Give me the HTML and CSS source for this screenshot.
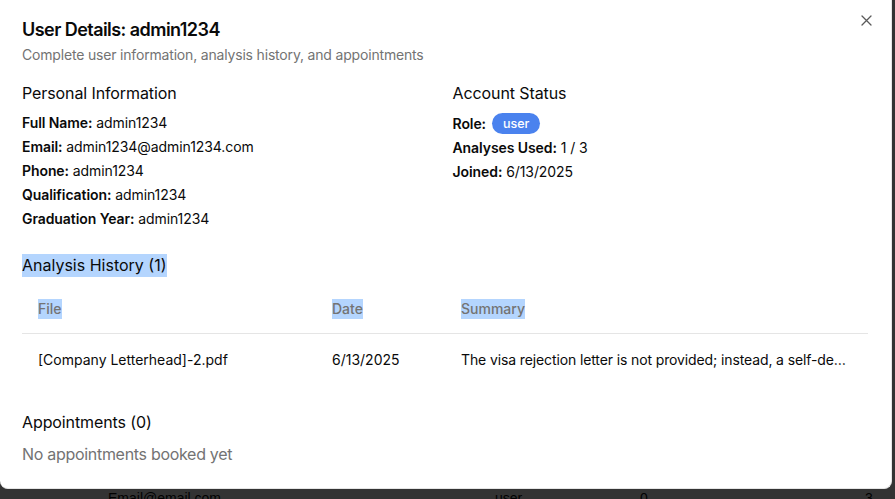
FILE: index.html
```html
<!DOCTYPE html>
<html lang="en">
<head>
<meta charset="utf-8">
<title>User Details</title>
<link rel="stylesheet" href="styles.css">
</head>
<body>
  <div class="page">
    <div class="bg-row">
      <span class="bg-email">Email@email.com</span>
      <span class="bg-role">user</span>
      <span class="bg-used">0</span>
      <span class="bg-limit">3</span>
    </div>
  </div>
  <div class="overlay"></div>
  <div class="dialog">
    <button class="close" aria-label="Close">
      <svg width="11" height="11" viewBox="0 0 11 11" fill="none" stroke="currentColor" stroke-width="1.3" stroke-linecap="round"><path d="M1 1 L10 10 M10 1 L1 10"/></svg>
    </button>
    <div class="header">
      <h2 class="title">User Details: admin1234</h2>
      <p class="subtitle">Complete user information, analysis history, and appointments</p>
    </div>
    <div class="content">
      <div class="info-grid">
        <div class="info-col">
          <h3 class="section-title">Personal Information</h3>
          <div class="rows">
            <div class="row"><b>Full Name:</b> admin1234</div>
            <div class="row"><b>Email:</b> admin1234@admin1234.com</div>
            <div class="row"><b>Phone:</b> admin1234</div>
            <div class="row"><b>Qualification:</b> admin1234</div>
            <div class="row"><b>Graduation Year:</b> admin1234</div>
          </div>
        </div>
        <div class="info-col">
          <h3 class="section-title">Account Status</h3>
          <div class="rows">
            <div class="row role-row"><b>Role:</b> <span class="badge">user</span></div>
            <div class="row"><b>Analyses Used:</b> 1 / 3</div>
            <div class="row"><b>Joined:</b> 6/13/2025</div>
          </div>
        </div>
      </div>
      <div class="section">
        <h3 class="section-title table-title"><span class="sel sel-lg">Analysis History (1)</span></h3>
        <table class="history">
          <colgroup><col class="c-file"><col class="c-date"><col class="c-sum"></colgroup>
          <thead>
            <tr><th><span class="sel">File</span></th><th><span class="sel">Date</span></th><th><span class="sel">Summary</span></th></tr>
          </thead>
          <tbody>
            <tr>
              <td>[Company Letterhead]-2.pdf</td>
              <td>6/13/2025</td>
              <td class="truncate">The visa rejection letter is not provided; instead, a self-declaration letter has been submitted.</td>
            </tr>
          </tbody>
        </table>
      </div>
      <div class="section">
        <h3 class="section-title">Appointments (0)</h3>
        <p class="empty">No appointments booked yet</p>
      </div>
    </div>
  </div>
</body>
</html>
```
FILE: styles.css
```css
* { box-sizing: border-box; }
html, body { margin: 0; padding: 0; }
body {
  width: 895px;
  height: 499px;
  overflow: hidden;
  background: #ffffff;
  font-family: Inter, "Noto Sans", sans-serif;
  color: #0a0a0a;
  position: relative;
}
.page {
  padding-top: 488px;
  font-family: "Liberation Sans", Arial, sans-serif;
  font-size: 14px;
  line-height: 20px;
  color: #0a0a0a;
}
.bg-row { display: flex; height: 20px; }
.bg-email { margin-left: 108px; width: 387px; }
.bg-role { width: 145px; }
.bg-used { width: 225px; }
.overlay {
  position: absolute;
  inset: 0;
  background: rgba(0, 0, 0, 0.8);
}
.dialog {
  position: absolute;
  left: 0;
  top: -4px;
  width: 892px;
  height: 493px;
  background: #ffffff;
  border-bottom: 1px solid #e5e5e5;
  border-right: 1px solid #e5e5e5;
  border-radius: 0 0 8px 8px;
  padding: 25px 24px 0 22px;
  display: flex;
  flex-direction: column;
  gap: 16px;
}
.close {
  position: absolute;
  top: 19px;
  right: 19px;
  width: 11px;
  height: 11px;
  padding: 0;
  border: none;
  background: transparent;
  color: #5a5a5a;
  display: flex;
}
.header { display: flex; flex-direction: column; gap: 6px; }
.title {
  margin: 0;
  font-size: 18px;
  line-height: 18px;
  font-weight: 600;
  letter-spacing: -0.55px;
}
.subtitle {
  margin: 0;
  font-size: 14px;
  line-height: 20px;
  color: #737373;
  letter-spacing: -0.18px;
}
.content { display: flex; flex-direction: column; gap: 24px; }
.info-grid { display: grid; grid-template-columns: 1fr 1fr; gap: 16px; }
.section-title {
  margin: 0 0 8px;
  font-size: 16px;
  line-height: 24px;
  font-weight: 400;
  letter-spacing: -0.1px;
}
.table-title { letter-spacing: 0; }
.rows { display: flex; flex-direction: column; gap: 4px; font-size: 14px; line-height: 20px; letter-spacing: -0.08px; }
.row b { font-weight: 600; }
.role-row { display: flex; align-items: center; gap: 6px; height: 21px; }
.badge {
  display: inline-flex;
  align-items: center;
  height: 21px;
  padding: 0 11px;
  border-radius: 999px;
  background: #4a82ee;
  color: #ffffff;
  font-size: 12.5px;
  font-weight: 500;
  line-height: 16px;
  letter-spacing: 0;
}
.sel { background: #b4d5fe; display: inline-block; }
.sel-lg { line-height: 23px; }
.history {
  width: 846px;
  border-collapse: collapse;
  table-layout: fixed;
  font-size: 14px;
  line-height: 20px;
}
.c-file { width: 294px; }
.c-date { width: 129px; }
.c-sum { width: 423px; }
.history th {
  height: 48px;
  padding: 0 16px;
  text-align: left;
  font-weight: 500;
  color: #737373;
  border-bottom: 1px solid #e5e5e5;
  vertical-align: middle;
}
.history td {
  padding: 16px;
  vertical-align: middle;
}
.truncate { white-space: nowrap; overflow: hidden; text-overflow: ellipsis; letter-spacing: -0.12px; }
.empty {
  margin: 0;
  font-size: 16px;
  line-height: 24px;
  color: #737373;
  letter-spacing: -0.3px;
}
```
